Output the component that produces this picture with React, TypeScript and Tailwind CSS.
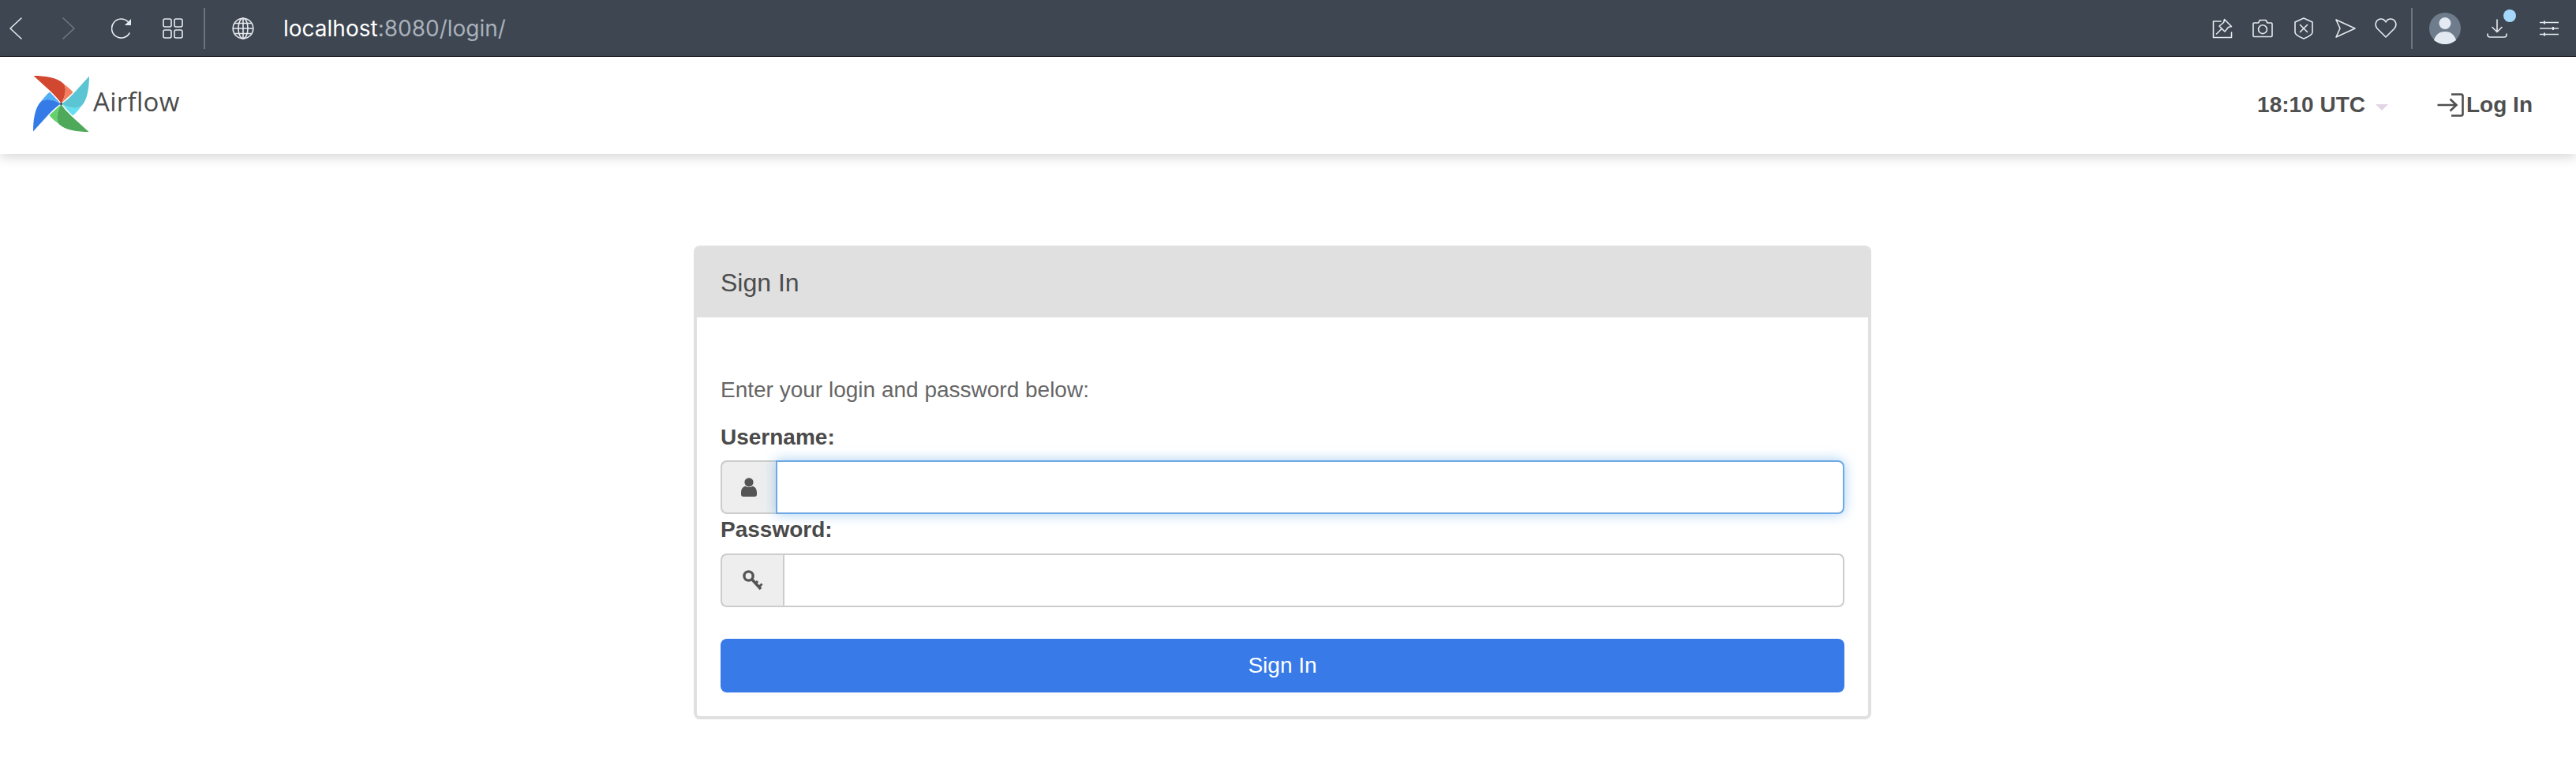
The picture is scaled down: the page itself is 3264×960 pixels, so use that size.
const SANS = "font-['Liberation_Sans',Arial,sans-serif]";

function Blade({ angle, dark, light }: { angle: number; dark: string; light: string }) {
  return (
    <g transform={`rotate(${angle} 35 35.5)`}>
      <path d="M0 0 C14 0 30 2 38 10 C42 15 41 25 35 35 C32 30 28 26 22 20 Z" fill={dark} />
      <path d="M38 10 C42 13 47 17 50 21 L35 35 C41 25 42 15 38 10 Z" fill={light} />
    </g>
  );
}

function PinwheelLogo() {
  return (
    <svg width="71" height="71" viewBox="0 0 70 71" className="block shrink-0">
      <Blade angle={0} dark="#d1472f" light="#f27e5f" />
      <Blade angle={90} dark="#5bc5d4" light="#65dff0" />
      <Blade angle={180} dark="#4ea95a" light="#63d26d" />
      <Blade angle={270} dark="#357be8" light="#52aff5" />
      <circle cx="35" cy="35.5" r="1.5" fill="#3b3b3b" />
    </svg>
  );
}

const iconProps = {
  fill: "none",
  stroke: "currentColor",
  strokeWidth: 1.6,
  strokeLinecap: "round" as const,
  strokeLinejoin: "round" as const,
};

function BackIcon({ className = "" }: { className?: string }) {
  return (
    <svg width="18" height="30" viewBox="0 0 18 30" className={className} {...iconProps}>
      <path d="M16 2 L2 15 L16 28" />
    </svg>
  );
}

function ForwardIcon({ className = "" }: { className?: string }) {
  return (
    <svg width="18" height="30" viewBox="0 0 18 30" className={className} {...iconProps}>
      <path d="M2 2 L16 15 L2 28" />
    </svg>
  );
}

function ReloadIcon() {
  return (
    <svg width="28" height="28" viewBox="0 0 28 28" {...iconProps}>
      <path d="M23 20 A12 12 0 1 1 21 5.5" />
      <path d="M25 2 V10 H17 Z" fill="currentColor" stroke="none" />
    </svg>
  );
}

function TabsIcon() {
  return (
    <svg width="26" height="26" viewBox="0 0 26 26" {...iconProps}>
      <rect x="1" y="1" width="10" height="10" rx="2" />
      <rect x="15" y="1" width="10" height="10" rx="2" />
      <rect x="1" y="15" width="10" height="10" rx="2" />
      <rect x="15" y="15" width="10" height="10" rx="2" />
    </svg>
  );
}

function GlobeIcon() {
  return (
    <svg width="28" height="28" viewBox="0 0 28 28" {...iconProps}>
      <circle cx="14" cy="14" r="12.8" />
      <ellipse cx="14" cy="14" rx="6" ry="12.8" />
      <path d="M14 1 V27 M1.5 14 H26.5 M3.5 7.5 H24.5 M3.5 20.5 H24.5" />
    </svg>
  );
}

function PinBoxIcon() {
  return (
    <svg width="26" height="26" viewBox="0 0 26 26" {...iconProps}>
      <path d="M11 4 H1.5 V24.5 H24.5 V18" />
      <path d="M15.5 1.5 L24.5 10.5 L20.5 11.5 L16 17 L9 10 L14.5 5.5 Z" />
      <path d="M12 13.5 L5.5 20" />
    </svg>
  );
}

function CameraIcon() {
  return (
    <svg width="26" height="24" viewBox="0 0 26 24" {...iconProps}>
      <path d="M2.5 5 H7.5 L9.5 1.5 H17 L19 5 H24 A1.2 1.2 0 0 1 25 6 V21.5 A1.2 1.2 0 0 1 24 22.5 H2.5 A1.2 1.2 0 0 1 1 21.5 V6 A1.2 1.2 0 0 1 2.5 5 Z" />
      <circle cx="13" cy="13.2" r="5.4" />
    </svg>
  );
}

function ShieldIcon() {
  return (
    <svg width="24" height="28" viewBox="0 0 24 28" {...iconProps}>
      <path d="M12 1 L23 6 V19 C23 22 17 25 12 27 C7 25 1 22 1 19 V6 Z" />
      <path d="M7.5 9.5 L16.5 18.5 M16.5 9.5 L7.5 18.5" />
    </svg>
  );
}

function SendIcon() {
  return (
    <svg width="26" height="24" viewBox="0 0 26 24" {...iconProps}>
      <path d="M1 1 L25 12 L1 23 L6 12 Z" />
    </svg>
  );
}

function HeartIcon() {
  return (
    <svg width="28" height="25" viewBox="0 0 28 25" {...iconProps}>
      <path d="M14 24 L3 13 C-1 8 2 1 8 1 C11 1 13 3 14 5 C15 3 17 1 20 1 C26 1 29 8 25 13 Z" />
    </svg>
  );
}

function AvatarIcon() {
  return (
    <svg width="40" height="40" viewBox="0 0 40 40">
      <circle cx="20" cy="20" r="20" fill="#6f7c8c" />
      <circle cx="20" cy="13.5" r="7.5" fill="#e3eaf2" />
      <path d="M6 35 C8 27 14 24 20 24 C26 24 32 27 34 35 C30 38 25 40 20 40 C15 40 10 38 6 35 Z" fill="#e3eaf2" />
    </svg>
  );
}

function DownloadIcon() {
  return (
    <svg width="26" height="24" viewBox="0 0 26 24" {...iconProps}>
      <path d="M13 1 V16 M7 10.5 L13 16.5 L19 10.5" />
      <path d="M1 19 V20 C1 22 2 23 4 23 H22 C24 23 25 22 25 20 V19" />
    </svg>
  );
}

function SlidersIcon() {
  return (
    <svg width="24" height="20" viewBox="0 0 24 20" fill="none" stroke="currentColor" strokeWidth="1.6">
      <path d="M0 2.5 H24 M0 10 H24 M0 17.5 H24" />
      <path d="M6 0.5 V4.5 M17 8 V12 M6 15.5 V19.5" strokeWidth="2" />
    </svg>
  );
}

function LoginIcon() {
  return (
    <svg width="34" height="30" viewBox="0 0 34 30" fill="none" stroke="#4f4f4f" strokeWidth="2.6">
      <path d="M18 1.5 H31 A1.8 1.8 0 0 1 32.5 3 V27 A1.8 1.8 0 0 1 31 28.5 H18" />
      <path d="M0.5 15 H24 M16.5 7.5 L24.5 15 L16.5 22.5" />
    </svg>
  );
}

function UserGlyph() {
  return (
    <svg width="20" height="24" viewBox="0 0 20 24" fill="#555555">
      <circle cx="10" cy="5.8" r="5.6" />
      <path d="M0 19 C0 14 2.5 11.5 5.5 10.8 C7 12.5 13 12.5 14.5 10.8 C17.5 11.5 20 14 20 19 V21 C20 23 19 24 17 24 H3 C1 24 0 23 0 21 Z" />
    </svg>
  );
}

function KeyGlyph() {
  return (
    <svg width="26" height="26" viewBox="0 0 26 26" fill="none" stroke="#555555">
      <circle cx="7.5" cy="7.5" r="5.6" strokeWidth="3.4" />
      <path d="M11.5 11.5 L23 24" strokeWidth="3.6" />
      <path d="M19 14 L16 17.5 M24.5 17.5 L20.5 21.5" strokeWidth="3" />
    </svg>
  );
}

function BrowserBar() {
  return (
    <div className="flex h-[72px] items-center border-b border-[#14181d] bg-[#3d4651] text-[#e6eaef]">
      <BackIcon className="ml-[11px]" />
      <ForwardIcon className="ml-[49px] text-[#6f7883]" />
      <div className="ml-[45px]"><ReloadIcon /></div>
      <div className="ml-[37px]"><TabsIcon /></div>
      <div className="ml-[26px] h-[52px] w-[2px] bg-[#6c7680]" />
      <div className="ml-[34px]"><GlobeIcon /></div>
      <div className="ml-[37px] font-['Inter',sans-serif] text-[28px] text-white">
        localhost<span className="text-[#a9b1bb]">:8080/login/</span>
      </div>
      <div className="ml-auto flex items-center">
        <PinBoxIcon />
        <div className="ml-[25px]"><CameraIcon /></div>
        <div className="ml-[27px]"><ShieldIcon /></div>
        <div className="ml-[28px]"><SendIcon /></div>
        <div className="ml-[24px]"><HeartIcon /></div>
        <div className="ml-[18px] h-[52px] w-[2px] bg-[#6c7680]" />
        <div className="ml-[21px]"><AvatarIcon /></div>
        <div className="relative ml-[33px]">
          <DownloadIcon />
          <span className="absolute -top-[12px] left-[21px] size-4 rounded-full bg-[#a3d8fb]" />
        </div>
        <div className="ml-[41px] mr-[22px]"><SlidersIcon /></div>
      </div>
    </div>
  );
}

function NavBar() {
  return (
    <div className={`relative z-10 flex h-[123px] items-center bg-white shadow-[0_4px_14px_rgba(0,0,0,0.16)] ${SANS}`}>
      <div className="ml-[42px] -mt-[5px]"><PinwheelLogo /></div>
      <span className="ml-[5px] -mt-[9px] font-['Open_Sans',sans-serif] text-[33px] tracking-[0.3px] text-[#4b4b4b]">Airflow</span>
      <div className="ml-auto -mt-[2px] flex items-center text-[28px] font-bold text-[#4f4f4f]">
        <span>18:10 UTC</span>
        <span className="ml-[13px] mt-[6px] h-0 w-0 border-x-[8px] border-t-[8px] border-x-transparent border-t-[#e1d6e6]" />
        <div className="ml-[62px]"><LoginIcon /></div>
        <span className="ml-[3px] mr-[55px]">Log In</span>
      </div>
    </div>
  );
}

function InputRow({ focused, addonWidth, icon }: { focused?: boolean; addonWidth: string; icon: React.ReactNode }) {
  return (
    <div className="flex h-[68px]">
      <div className={`flex ${addonWidth} shrink-0 items-center justify-center rounded-l-[8px] border-2 border-r-0 border-[#cccccc] bg-[#eeeeee]`}>
        {icon}
      </div>
      <input
        type="text"
        className={
          focused
            ? "relative min-w-0 flex-1 rounded-r-[8px] border-2 border-[#6fa9e4] bg-white shadow-[0_0_16px_rgba(102,175,233,0.6)] outline-none"
            : "min-w-0 flex-1 rounded-r-[8px] border-2 border-[#cccccc] bg-white outline-none"
        }
      />
    </div>
  );
}

function LoginCard() {
  return (
    <div className={`ml-[879px] mt-[116px] w-[1492px] overflow-hidden rounded-[8px] border-4 border-t-0 border-[#e0e0e0] bg-white ${SANS}`}>
      <div className="flex h-[91px] items-center bg-[#e0e0e0] pl-[30px] pt-[2px] text-[32px] text-[#4c4c4c]">Sign In</div>
      <div className="px-[30px] pb-[30px] pt-[72px] text-[28px] leading-[40px]">
        <p className="mb-[20px] text-[#666666]">Enter your login and password below:</p>
        <label className="mb-[9px] block font-bold text-[#4a4a4a]">Username:</label>
        <InputRow focused addonWidth="w-[70px]" icon={<UserGlyph />} />
        <label className="mb-[10px] block font-bold text-[#4a4a4a]">Password:</label>
        <InputRow addonWidth="w-[79px]" icon={<KeyGlyph />} />
        <button className="mt-[40px] block h-[68px] w-full rounded-[8px] bg-[#377ae8] text-white">Sign In</button>
      </div>
    </div>
  );
}

export default function App() {
  return (
    <div className="h-[960px] w-[3264px] overflow-hidden bg-white">
      <BrowserBar />
      <NavBar />
      <LoginCard />
    </div>
  );
}
